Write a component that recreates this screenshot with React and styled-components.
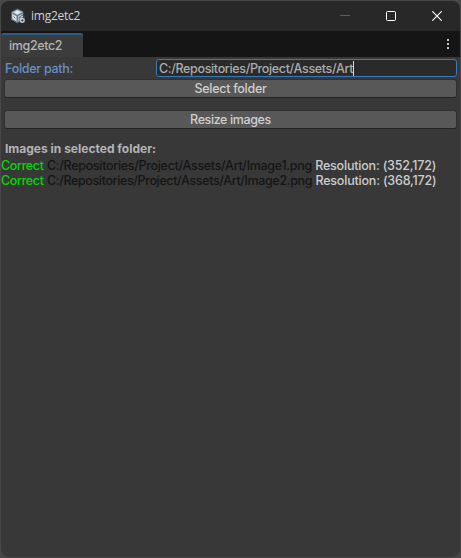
import React from "react";
import styled, { createGlobalStyle } from "styled-components";

const GlobalStyle = createGlobalStyle`
  * { box-sizing: border-box; }
  body { margin: 0; background: #454545; overflow: hidden; }
`;

const Backdrop = styled.div`
  width: 461px;
  height: 558px;
  padding: 1px;
  background: #484848;
  font-family: Inter, sans-serif;
  font-size: 12.5px;
  font-weight: 500;
`;

const Window = styled.div`
  width: 459px;
  height: 556px;
  display: flex;
  flex-direction: column;
  border-radius: 8px;
  overflow: hidden;
  background: #383838;
`;

const TitleBar = styled.header`
  height: 30px;
  flex: none;
  display: flex;
  align-items: center;
  padding-left: 9px;
  background: #282828;
`;

const Title = styled.span`
  flex: 1;
  margin-left: 5px;
  font-family: "Open Sans", sans-serif;
  font-size: 12px;
  font-weight: 400;
  line-height: 16px;
  letter-spacing: -0.25px;
  color: #d2d2d2;
`;

const WindowButton = styled.span`
  width: 46px;
  height: 28px;
  display: flex;
  align-items: center;
  justify-content: center;
  color: ${(p) => (p.$dim ? "#5c5c5c" : "#ffffff")};
`;

const TabBar = styled.nav`
  height: 26px;
  flex: none;
  display: flex;
  align-items: flex-end;
  justify-content: space-between;
  padding-right: 10px;
  background: #151515;
`;

const Tab = styled.div`
  width: 82px;
  height: 24px;
  padding-left: 8px;
  border-top: 2px solid #2c5d87;
  border-radius: 2px 2px 0 0;
  background: #3c3c3c;
  color: #b4b4b4;
  line-height: 22px;
  letter-spacing: -0.36px;
`;

const Dots = styled.svg`
  display: block;
  margin-bottom: 7px;
`;

const Panel = styled.main`
  flex: 1;
  padding-top: 2px;
`;

const FieldRow = styled.div`
  height: 18px;
  display: flex;
  margin: 0 3px 2px 4px;
`;

const Label = styled.label`
  width: 151px;
  line-height: 19px;
  letter-spacing: -0.28px;
  color: #6a8fc8;
`;

const PathField = styled.div`
  flex: 1;
  display: flex;
  align-items: center;
  padding-left: 2px;
  border: 1px solid #3a79bb;
  border-radius: 3px;
  background: #2a2a2a;
  color: #acacac;
  white-space: nowrap;
  letter-spacing: -0.35px;
`;

const Caret = styled.span`
  width: 1px;
  height: 15px;
  background: #d8d8d8;
`;

const Button = styled.button`
  display: block;
  width: 453px;
  height: 19px;
  margin: 0 3px ${(p) => p.$gap}px;
  padding: 0;
  border: 1px solid #303030;
  border-bottom-color: #242424;
  border-radius: 3px;
  background: #585858;
  color: #cecece;
  font: inherit;
  line-height: 16px;
  letter-spacing: ${(p) => p.$tracking}px;
`;

const Heading = styled.h2`
  margin: 0 0 0 4px;
  font-size: 12px;
  font-weight: 700;
  line-height: 18px;
  color: #b4b4b4;
`;

const Entry = styled.div`
  height: 15px;
  line-height: 15px;
  white-space: pre;
  color: #cccccc;
`;

const Status = styled.span`
  letter-spacing: -0.36px;
  color: #00d800;
`;

const Path = styled.span`
  letter-spacing: ${(p) => p.$tracking}px;
  color: #151515;
`;

const Resolution = styled.span`
  letter-spacing: -0.19px;
`;

const images = [
  { path: "C:/Repositories/Project/Assets/Art/Image1.png", size: "(352,172)", tracking: -0.31 },
  { path: "C:/Repositories/Project/Assets/Art/Image2.png", size: "(368,172)", tracking: -0.37 },
];

function AppIcon() {
  return (
    <svg width="16" height="16" viewBox="0 0 16 16">
      <path d="M7.3 1 13 3.6v7.8l-5.7 3.4-5.8-3.4V4z" fill="#a9bac6" stroke="#526878" strokeWidth="1" strokeLinejoin="round" />
      <path d="m4 4.3 3.3-1.8 3.4 1.8-3.4 2z" fill="#e4edf1" />
      <path d="m2.7 6.5 3.6 2v4.2l-3.6-2.1z" fill="#dce7ed" />
      <path d="m2.5 5 4.8 2.8L12.4 5M7.3 7.8v6" fill="none" stroke="#536a7a" strokeWidth="1" />
      <path d="m3.5 8.5 1.8 2" stroke="#536a78" />
      <path d="M9.5 9.2 11.5 7.5H15v7.5H9.7z" fill="#3c4851" />
      <path d="M13 8.4c-2 .2-2.5 1.8-2.5 3.5 0 3.1 3.7 2.9 3.7.4 0-2.1-2.6-2-3.4-.5" fill="none" stroke="#d0d6da" strokeWidth="1.2" />
    </svg>
  );
}

export default function App() {
  return (
    <Backdrop>
      <GlobalStyle />
      <Window>
        <TitleBar>
          <AppIcon />
          <Title>img2etc2</Title>
          <WindowButton $dim>
            <svg width="10" height="10"><path d="M0 4.5h10" stroke="currentColor" /></svg>
          </WindowButton>
          <WindowButton>
            <svg width="10" height="10" fill="none"><rect x=".5" y=".5" width="9" height="9" rx="1" stroke="currentColor" /></svg>
          </WindowButton>
          <WindowButton>
            <svg width="10" height="10"><path d="m.3.3 9.4 9.4M9.7.3.3 9.7" stroke="currentColor" strokeWidth="1.1" /></svg>
          </WindowButton>
        </TitleBar>
        <TabBar>
          <Tab>img2etc2</Tab>
          <Dots width="4" height="12" fill="#c4c4c4">
            <rect x="1" y="1" width="2" height="2" />
            <rect x="1" y="5" width="2" height="2" />
            <rect x="1" y="9" width="2" height="2" />
          </Dots>
        </TabBar>
        <Panel>
          <FieldRow>
            <Label>Folder path:</Label>
            <PathField>C:/Repositories/Project/Assets/Art<Caret /></PathField>
          </FieldRow>
          <Button $gap={12} $tracking={-0.28}>Select folder</Button>
          <Button $gap={11} $tracking={-0.38}>Resize images</Button>
          <Heading>Images in selected folder:</Heading>
          {images.map((image) => (
            <Entry key={image.path}>
              <Status>Correct</Status> <Path $tracking={image.tracking}>{image.path}</Path> <Resolution>Resolution: {image.size}</Resolution>
            </Entry>
          ))}
        </Panel>
      </Window>
    </Backdrop>
  );
}
